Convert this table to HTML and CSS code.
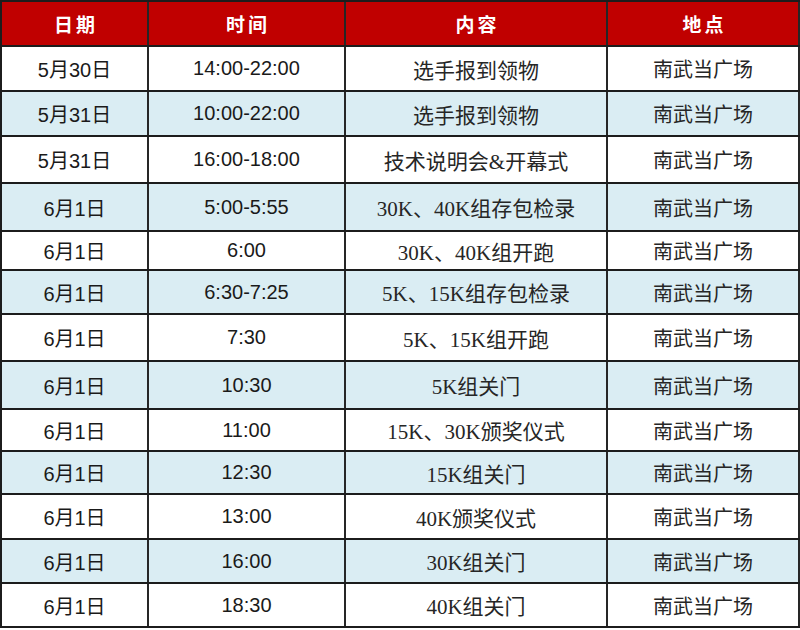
FILE: index.html
```html
<!DOCTYPE html>
<html lang="zh-CN">
<head>
<meta charset="utf-8">
<title>赛程安排</title>
<link rel="stylesheet" href="styles.css">
</head>
<body>
<div class="sheet">
  <div class="row head r45">
    <div class="cell"><span class="ht">日期</span></div>
    <div class="cell"><span class="ht">时间</span></div>
    <div class="cell"><span class="ht">内容</span></div>
    <div class="cell"><span class="ht">地点</span></div>
  </div>
  <div class="row r45">
    <div class="cell date">5月30日</div><div class="cell time">14:00-22:00</div><div class="cell what">选手报到领物</div><div class="cell where">南武当广场</div>
  </div>
  <div class="row alt r45">
    <div class="cell date">5月31日</div><div class="cell time">10:00-22:00</div><div class="cell what">选手报到领物</div><div class="cell where">南武当广场</div>
  </div>
  <div class="row r47">
    <div class="cell date">5月31日</div><div class="cell time">16:00-18:00</div><div class="cell what">技术说明会&amp;开幕式</div><div class="cell where">南武当广场</div>
  </div>
  <div class="row alt r48">
    <div class="cell date">6月1日</div><div class="cell time">5:00-5:55</div><div class="cell what">30K、40K组存包检录</div><div class="cell where">南武当广场</div>
  </div>
  <div class="row r39">
    <div class="cell date">6月1日</div><div class="cell time">6:00</div><div class="cell what">30K、40K组开跑</div><div class="cell where">南武当广场</div>
  </div>
  <div class="row alt r44">
    <div class="cell date">6月1日</div><div class="cell time">6:30-7:25</div><div class="cell what">5K、15K组存包检录</div><div class="cell where">南武当广场</div>
  </div>
  <div class="row r47">
    <div class="cell date">6月1日</div><div class="cell time">7:30</div><div class="cell what">5K、15K组开跑</div><div class="cell where">南武当广场</div>
  </div>
  <div class="row alt r48">
    <div class="cell date">6月1日</div><div class="cell time">10:30</div><div class="cell what">5K组关门</div><div class="cell where">南武当广场</div>
  </div>
  <div class="row r42">
    <div class="cell date">6月1日</div><div class="cell time">11:00</div><div class="cell what">15K、30K颁奖仪式</div><div class="cell where">南武当广场</div>
  </div>
  <div class="row alt r43">
    <div class="cell date">6月1日</div><div class="cell time">12:30</div><div class="cell what">15K组关门</div><div class="cell where">南武当广场</div>
  </div>
  <div class="row r45">
    <div class="cell date">6月1日</div><div class="cell time">13:00</div><div class="cell what">40K颁奖仪式</div><div class="cell where">南武当广场</div>
  </div>
  <div class="row alt r44">
    <div class="cell date">6月1日</div><div class="cell time">16:00</div><div class="cell what">30K组关门</div><div class="cell where">南武当广场</div>
  </div>
  <div class="row r44">
    <div class="cell date">6月1日</div><div class="cell time">18:30</div><div class="cell what">40K组关门</div><div class="cell where">南武当广场</div>
  </div>
</div>
</body>
</html>
```
FILE: styles.css
```css
html, body {
  margin: 0;
  padding: 0;
  background: #ffffff;
}
* { box-sizing: border-box; }

.sheet {
  width: 800px;
  border-top: 2px solid #1c1c1c;
  border-left: 2px solid #1c1c1c;
}

.row {
  display: grid;
  grid-template-columns: 147px 197px 262px 192px;
  border-bottom: 2px solid #1c1c1c;
  background: #ffffff;
}
.row.alt { background: #daedf3; }
.row.head { background: #c00000; }

.r39 { height: 39px; }
.r42 { height: 42px; }
.r43 { height: 43px; }
.r44 { height: 44px; }
.r45 { height: 45px; }
.r47 { height: 47px; }
.r48 { height: 48px; }

.cell {
  display: flex;
  align-items: center;
  justify-content: center;
  border-right: 2px solid #262626;
  color: #1a1a1a;
  white-space: nowrap;
}

.ht {
  color: #ffffff;
  font-family: "Noto Sans CJK SC", sans-serif;
  font-weight: bold;
  font-size: 19px;
  letter-spacing: 3px;
  padding-left: 3px;
  line-height: 1;
}

.date, .time {
  font-family: "Liberation Sans", "Noto Sans CJK SC", sans-serif;
  font-size: 20px;
}

.what {
  font-family: "Liberation Serif", "Noto Sans CJK SC", serif;
  font-size: 21px;
  color: #262626;
}

.where {
  font-family: "Noto Sans CJK SC", sans-serif;
  font-size: 20px;
  color: #262626;
}
```
